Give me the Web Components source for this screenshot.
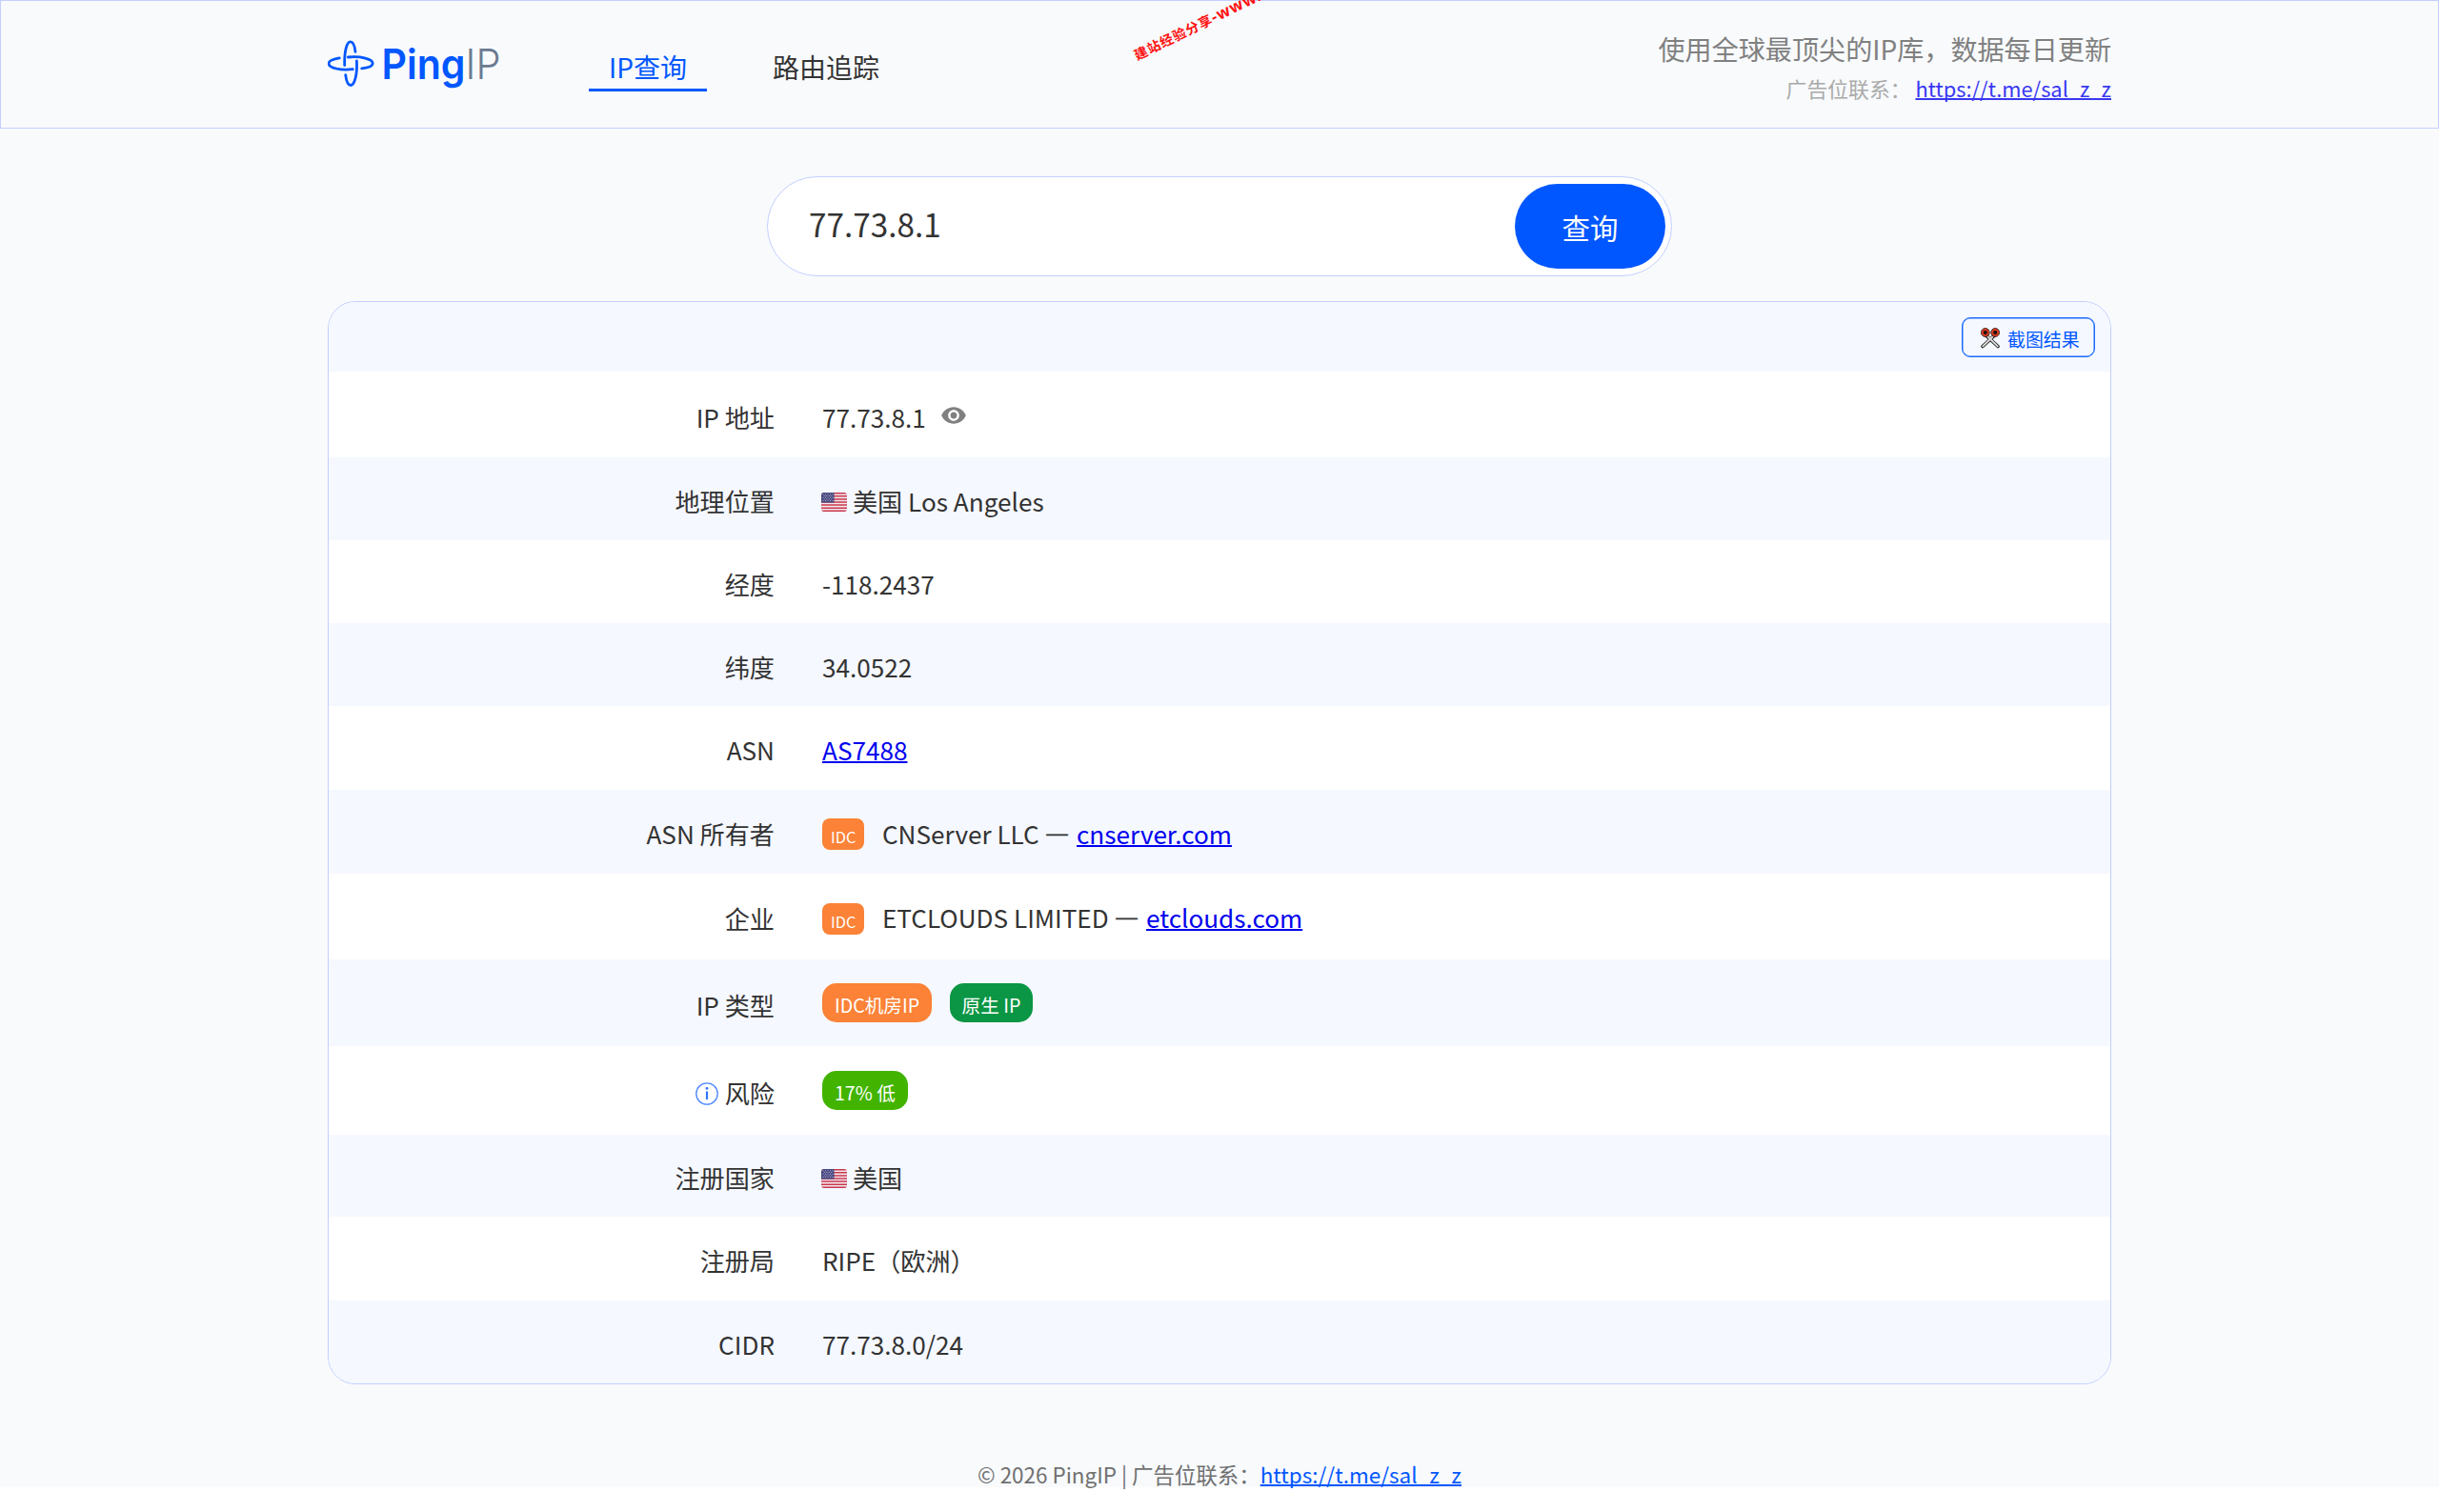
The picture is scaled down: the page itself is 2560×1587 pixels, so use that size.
<!DOCTYPE html>
<html lang="zh-CN">
<head>
<meta charset="utf-8">
<title>PingIP</title>
<style>
  html { background: #fff; }
  body {
    --color-blue: #0057ff;
    --color-line: #c3cfff;
    --color-bg: #f8fafc;
    --color-stripe: #f5f8ff;
    --color-text: #333;
    margin: 0;
    height: 1587px;
    overflow: hidden;
    font: 26.13px/38px "Noto Sans CJK SC", sans-serif;
    color: var(--color-text);
  }
  a {
    color: #0000ee;
    text-decoration: underline 2px;
    text-underline-offset: 1px;
    text-decoration-skip-ink: none;
  }
  .dash {
    margin-right: 1.5px;
    -webkit-text-stroke: .6px;
  }
</style>
</head>
<body>

<template id="tmpl-ping-page">
  <style>
  :host {
    display: flex;
    flex-flow: column nowrap;
    align-items: center;
    box-sizing: border-box;
    height: 1561px;
    background: var(--color-bg);
  }
  </style>
  <slot></slot>
</template>

<template id="tmpl-ping-header">
  <style>
  :host {
    display: flex;
    justify-content: center;
    width: 100%;
    height: 135px;
    box-sizing: border-box;
    border: 1px solid var(--color-line);
    flex: none;
  }
  .inner {
    display: flex;
    width: 1872px;
    height: 100%;
  }
  nav {
    display: flex;
    gap: 48px;
    margin-left: 88px;
    padding-top: 47px;
  }
  .side {
    margin-left: auto;
    padding-top: 29px;
    text-align: right;
  }
  </style>
  <div class="inner">
    <slot name="logo"></slot>
    <nav><slot name="nav"></slot></nav>
    <div class="side"><slot></slot></div>
  </div>
</template>

<template id="tmpl-ping-logo">
  <style>
  :host { display: block; width: 186px; height: 100%; }
  svg { display: block; }
  </style>
  <svg width="186" height="133" viewBox="344 1 186 133" fill="none">
    <g stroke="#0057ff" stroke-width="2.8" stroke-linecap="round">
      <path d="M361.700 68.500 C361.300 54 364 43.800 367.700 43.800 C370.500 43.800 372.400 48.500 373 54.300"/>
      <path d="M365.300 60 C379 58.800 391.200 61.800 391.200 66.500 C391.200 69.300 386.500 71.200 379.700 71.800"/>
      <path d="M356.300 60.900 C349.500 62 345 64 345 66.700 C345 71.200 357.500 74.300 370.300 72.700"/>
      <path d="M374.400 64 C375.200 78.500 372 89.500 368.200 89.500 C365.400 89.500 363.500 84.800 362.700 78.700"/>
    </g>
    <text x="400.500" y="83" font-family="Inter" font-weight="600" font-size="44" fill="#0057ff" textLength="88" lengthAdjust="spacingAndGlyphs">Ping</text>
    <text x="488.500" y="83" font-family="Inter" font-weight="300" font-size="44" fill="#6b7a90" textLength="37" lengthAdjust="spacingAndGlyphs">IP</text>
  </svg>
</template>

<template id="tmpl-ping-tab">
  <style>
  :host {
    display: block;
    box-sizing: border-box;
    height: 48px;
    padding: 2px 21px 0;
    font-size: 28px;
    line-height: 40px;
  }
  :host([active]) {
    color: var(--color-blue);
    border-bottom: 3px solid var(--color-blue);
  }
  </style>
  <slot></slot>
</template>

<template id="tmpl-ping-search">
  <style>
  :host {
    display: flex;
    align-items: center;
    box-sizing: border-box;
    width: 950px;
    height: 105px;
    margin-top: 50px;
    padding: 0 6px 0 43px;
    background: #fff;
    border: 1px solid var(--color-line);
    border-radius: 53px;
    flex: none;
  }
  .value { flex: 1; font-size: 33.3px; line-height: 48px; padding-bottom: 6px; }
  button {
    width: 158px;
    height: 89px;
    padding: 0;
    border: 0;
    border-radius: 45px;
    background: var(--color-blue);
    color: #fff;
    font-family: inherit;
    font-size: 29.4px;
  }
  </style>
  <div class="value"><slot></slot></div>
  <button><slot name="action"></slot></button>
</template>

<template id="tmpl-ping-card">
  <style>
  :host {
    display: block;
    box-sizing: border-box;
    width: 1872px;
    height: 1137px;
    margin-top: 26px;
    border: 1px solid var(--color-line);
    border-radius: 29px;
    background: #fff;
    overflow: hidden;
    flex: none;
  }
  .top {
    display: flex;
    justify-content: flex-end;
    box-sizing: border-box;
    height: 73px;
    padding: 16px 16px 0 0;
    background: var(--color-stripe);
  }
  </style>
  <div class="top"><slot name="tool"></slot></div>
  <slot></slot>
</template>

<template id="tmpl-ping-shot">
  <style>
  :host {
    display: flex;
    align-items: center;
    box-sizing: border-box;
    width: 140px;
    height: 42px;
    padding-left: 19px;
    gap: 8px;
    border: 1px solid #1a69ff;
    box-shadow: inset 0 0 0 .5px #1a69ff;
    border-radius: 9px;
    color: var(--color-blue);
    font-size: 18.9px;
    line-height: 28px;
  }
  svg { margin-top: 2px; }
  .label { padding-top: 3px; }
  </style>
  <svg width="20" height="22" viewBox="0 0 20 22">
    <g stroke="#222" stroke-linecap="round">
      <path d="M6 8.500 L18 19.500 M14 8.500 L2 19.500" stroke-width="3.600"/>
      <path d="M7.500 9.500 L17.800 19.400 M12.500 9.500 L2.200 19.400" stroke="#ddd" stroke-width="1.900"/>
    </g>
    <g fill="#111" stroke="#d8391f" stroke-width="2.400">
      <circle cx="4.800" cy="5" r="3.200"/>
      <circle cx="15.200" cy="5" r="3.200"/>
    </g>
    <g fill="none" stroke="#222" stroke-width=".8">
      <circle cx="4.800" cy="5" r="4.500"/>
      <circle cx="15.200" cy="5" r="4.500"/>
    </g>
  </svg>
  <span class="label"><slot></slot></span>
</template>

<template id="tmpl-ping-row">
  <style>
  :host {
    display: grid;
    grid-template-columns: 468px 1fr;
    column-gap: 50px;
    align-items: center;
    height: 87.500px;
  }
  :host([striped]) { background: var(--color-stripe); }
  .label, .value {
    display: flex;
    align-items: center;
    padding-top: 5px;
    white-space: nowrap;
  }
  .label { justify-content: flex-end; }
  </style>
  <div class="label"><slot name="label"></slot></div>
  <div class="value"><slot></slot></div>
</template>

<template id="tmpl-ping-badge">
  <style>
  :host {
    display: block;
    box-sizing: border-box;
    height: 41px;
    margin: -5px 18.5px 0 0;
    padding: 7px 13px 0;
    border-radius: 15px;
    background: var(--badge, #fb8237);
    color: #fff;
    font-size: 19.6px;
    line-height: 31px;
  }
  :host([small]) {
    height: 33px;
    margin: 1px 18.5px 0 0;
    padding: 6px 9px 0;
    border-radius: 8px;
    font-size: 16.33px;
    line-height: 26px;
  }
  </style>
  <slot></slot>
</template>

<template id="tmpl-ping-flag">
  <style>
  :host { display: block; margin: 2px 6px 0 -1px; }
  svg { display: block; }
  </style>
  <svg width="27" height="20" viewBox="0 0 27 20">
    <clipPath id="c"><rect width="27" height="20" rx="3"/></clipPath>
    <g clip-path="url(#c)">
      <rect width="27" height="20" fill="#f3e9ee"/>
      <path stroke="#c9374d" stroke-width="1.540" d="M0 .77H27M0 3.850H27M0 6.920H27M0 10H27M0 13.080H27M0 16.150H27M0 19.230H27"/>
      <rect width="13.500" height="10.500" fill="#46467f"/>
      <g stroke="#b9b9d4" stroke-width="1" stroke-dasharray="1 1.500">
        <path d="M1.500 1.800H12.500M1.500 5.200H12.500M1.500 8.600H12.500"/>
        <path d="M2.750 3.500H12M2.750 6.900H12"/>
      </g>
    </g>
  </svg>
</template>

<template id="tmpl-ping-eye">
  <style>
  :host { display: block; margin: -4px 0 0 15px; }
  svg { display: block; }
  </style>
  <svg width="28" height="28" viewBox="0 0 24 24" fill="#808080">
    <path d="M12 4.500C7 4.500 2.730 7.610 1 12c1.730 4.390 6 7.500 11 7.500s9.270-3.110 11-7.500c-1.730-4.390-6-7.500-11-7.500zM12 17c-2.760 0-5-2.240-5-5s2.240-5 5-5 5 2.240 5 5-2.240 5-5 5zm0-8c-1.660 0-3 1.340-3 3s1.340 3 3 3 3-1.340 3-3-1.340-3-3-3z"/>
  </svg>
</template>

<template id="tmpl-ping-info">
  <style>
  :host { display: block; margin: 2px 7px 0 0; }
  svg { display: block; }
  </style>
  <svg width="24" height="24" viewBox="0 0 24 24">
    <circle cx="12" cy="12" r="11.200" fill="none" stroke="#4a86ff" stroke-width="1.300"/>
    <path d="M12 9.500V18" stroke="#2f74ff" stroke-width="2.200"/>
    <circle cx="12" cy="6.400" r="1.400" fill="#2f74ff"/>
  </svg>
</template>

<template id="tmpl-ping-note">
  <style>
  :host {
    display: block;
    font-size: 28.1px;
    line-height: 42px;
    color: #808080;
    white-space: nowrap;
  }
  :host([kind="contact"]) {
    font-size: 21.84px;
    color: #aaa;
    --link: #3838f2;
  }
  :host([kind="footer"]) {
    margin-top: 73px;
    font-size: 22.45px;
    color: #707070;
    --link: var(--color-blue);
  }
  ::slotted(a) { color: var(--link) !important; }
  </style>
  <slot></slot>
</template>

<template id="tmpl-ping-watermark">
  <style>
  :host {
    position: absolute;
    left: 1191px;
    top: 48px;
    font: bold 14px/20px "Noto Sans", "Noto Sans CJK SC", sans-serif;
    letter-spacing: 1px;
    color: #ff1010;
    white-space: nowrap;
    transform: rotate(-26deg);
    transform-origin: 0 50%;
  }
  ::slotted(span) { font-size: 16.5px; }
  </style>
  <slot></slot>
</template>

<ping-page>
  <ping-header>
    <ping-logo slot="logo"></ping-logo>
    <ping-tab slot="nav" active>IP查询</ping-tab>
    <ping-tab slot="nav">路由追踪</ping-tab>
    <ping-note>使用全球最顶尖的IP库，数据每日更新</ping-note>
    <ping-note kind="contact">广告位联系： <a href="#">https://t.me/sal_z_z</a></ping-note>
  </ping-header>
  <ping-search>77.73.8.1<span slot="action">查询</span></ping-search>
  <ping-card>
    <ping-shot slot="tool">截图结果</ping-shot>
    <ping-row style="height: 90px"><span slot="label">IP 地址</span><span>77.73.8.1</span><ping-eye></ping-eye></ping-row>
    <ping-row striped style="height: 86.5px"><span slot="label">地理位置</span><ping-flag></ping-flag><span>美国 Los Angeles</span></ping-row>
    <ping-row><span slot="label">经度</span><span>-118.2437</span></ping-row>
    <ping-row striped style="height: 87px"><span slot="label">纬度</span><span>34.0522</span></ping-row>
    <ping-row><span slot="label">ASN</span><a href="#">AS7488</a></ping-row>
    <ping-row striped style="height: 88px"><span slot="label">ASN 所有者</span><ping-badge small>IDC</ping-badge><span>CNServer LLC <span class="dash">—</span> <a href="#">cnserver.com</a></span></ping-row>
    <ping-row style="height: 90px"><span slot="label">企业</span><ping-badge small>IDC</ping-badge><span style="margin-top: -2px">ETCLOUDS LIMITED <span class="dash">—</span> <a href="#">etclouds.com</a></span></ping-row>
    <ping-row striped style="height: 91.5px"><span slot="label">IP 类型</span><ping-badge>IDC机房IP</ping-badge><ping-badge style="--badge: #0a9644">原生 IP</ping-badge></ping-row>
    <ping-row style="height: 92.5px"><ping-info slot="label"></ping-info><span slot="label">风险</span><ping-badge style="--badge: #42b400">17% 低</ping-badge></ping-row>
    <ping-row striped style="height: 86.5px"><span slot="label">注册国家</span><ping-flag></ping-flag><span>美国</span></ping-row>
    <ping-row><span slot="label">注册局</span><span>RIPE（欧洲）</span></ping-row>
    <ping-row striped style="height: 87.5px"><span slot="label">CIDR</span><span>77.73.8.0/24</span></ping-row>
  </ping-card>
  <ping-note kind="footer">© 2026 PingIP | 广告位联系：<a href="#">https://t.me/sal_z_z</a></ping-note>
</ping-page>
<ping-watermark>建站经验分享<span>-www.w</span></ping-watermark>

<script>
const names = [
  'page', 'header', 'logo', 'tab', 'search', 'card', 'shot', 'row',
  'badge', 'flag', 'eye', 'info', 'note', 'watermark'
];
names.forEach(name => {
  const tmpl = document.querySelector('#tmpl-ping-' + name).content;
  customElements.define('ping-' + name, class extends HTMLElement {
    constructor() {
      super();
      this.root = this.attachShadow({ mode: 'open' });
      this.root.append(document.importNode(tmpl, true));
    }
  });
});
</script>
</body>
</html>
